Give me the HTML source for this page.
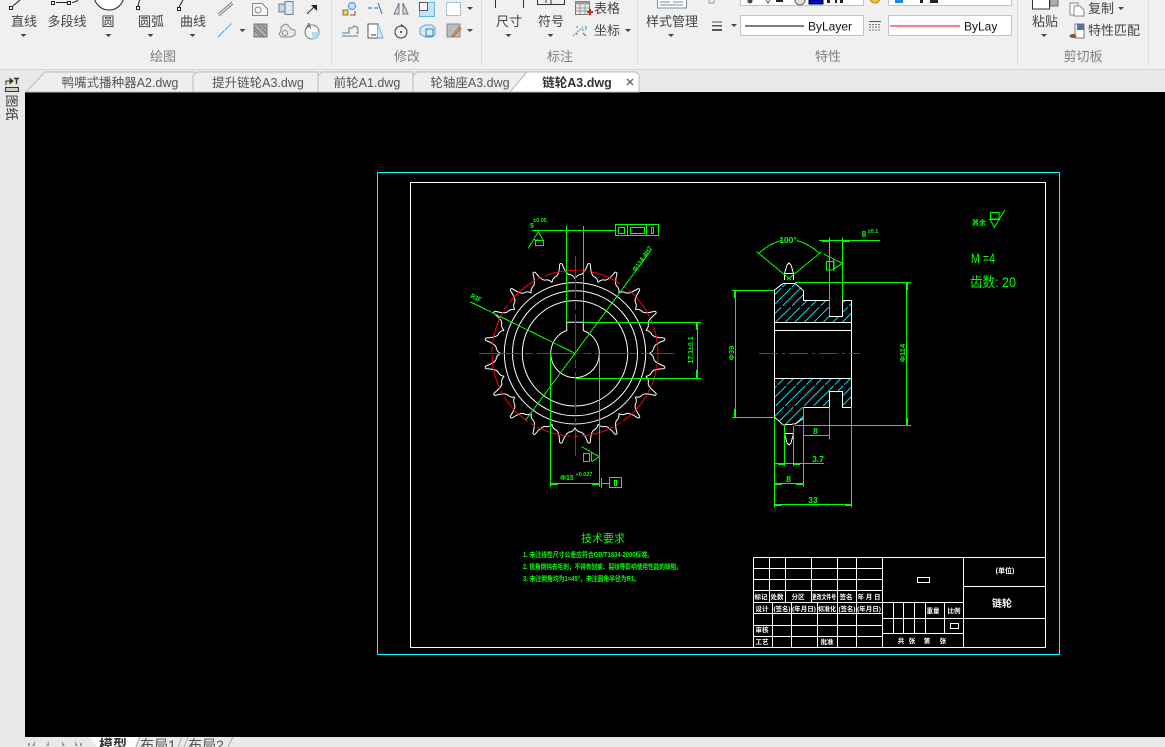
<!DOCTYPE html>
<html lang="zh">
<head>
<meta charset="utf-8">
<title>链轮A3.dwg</title>
<style>
html,body{margin:0;padding:0;background:#000;width:1165px;height:747px;overflow:hidden}
svg{display:block;font-family:"Liberation Sans","Noto Sans CJK SC",sans-serif}
.rb{font-size:13px;fill:#444;text-anchor:middle}
.gl{font-size:13px;fill:#808080;text-anchor:middle}
.tb{font-size:12.5px;fill:#555;text-anchor:middle}
.g{stroke:#00ff00;fill:none;stroke-width:1;shape-rendering:crispEdges}
.ga{stroke:#00ff00;fill:none;stroke-width:1;shape-rendering:crispEdges}
.w{stroke:#fff;fill:none;stroke-width:1}
.wc{stroke:#fff;fill:none;stroke-width:1;shape-rendering:crispEdges}
.r{stroke:#ff0000;fill:none;stroke-width:1;shape-rendering:crispEdges}
.gt{fill:#00ff00;font-size:7px;text-anchor:middle;font-weight:bold}
.wt{fill:#fff;font-size:6.5px;text-anchor:middle;font-weight:bold}
.ar{fill:#00ff00}
</style>
</head>
<body>
<svg width="1165" height="747" viewBox="0 0 1165 747" xmlns="http://www.w3.org/2000/svg">
<defs>
<path id="t" d="M73.6,-11.6Q78,-10.5 79,-6L81,-4.2Q85,-2.2 90.3,-1.2Q91.6,0 90.3,1.2Q85,2.2 81,4.2L79,6Q78,10.5 73.6,11.6"/>
<clipPath id="cl1"><rect x="964" y="15" width="33" height="21"/></clipPath>
<clipPath id="hu"><path d="M774.3,322.3V290L783.3,283.3H795L803.3,290.7V300.3H829.3V316.3H842.3V300.3H851.7V322.3Z"/></clipPath>
<clipPath id="hl"><path d="M774.3,378.3V416.7L783.3,425L795,424L803.3,418.3V407.3H829.3V391.3H842.3V407.3H851.7V378.3Z"/></clipPath>
</defs>

<rect x="0" y="0" width="1165" height="747" fill="#000"/>

<!-- ribbon -->
<rect x="0" y="0" width="1165" height="69" fill="#f0f0f0"/>
<rect x="0" y="69" width="1165" height="1" fill="#d6d6d6"/>
<rect x="0" y="70" width="1165" height="22" fill="#e9e9e9"/>
<rect x="0" y="70" width="25" height="677" fill="#e9e9e9"/>
<rect x="25" y="737" width="1140" height="10" fill="#e9e9e9"/>
<g fill="#dcdcdc">
<rect x="331" y="0" width="1" height="65"/><rect x="481" y="0" width="1" height="65"/>
<rect x="637" y="0" width="1" height="65"/><rect x="1017" y="0" width="1" height="65"/>
<rect x="1148" y="0" width="1" height="65"/>
</g>

<text class="rb" x="24" y="26">直线</text>
<text class="rb" x="67" y="26">多段线</text>
<text class="rb" x="108" y="26">圆</text>
<text class="rb" x="151" y="26">圆弧</text>
<text class="rb" x="193" y="26">曲线</text>
<text class="rb" x="509" y="26">尺寸</text>
<text class="rb" x="551" y="26">符号</text>
<text class="rb" x="607" y="13">表格</text>
<text class="rb" x="607" y="35">坐标</text>
<text class="rb" x="672" y="26">样式管理</text>
<text class="rb" x="1045" y="26">粘贴</text>
<text class="rb" x="1101" y="13">复制</text>
<text class="rb" x="1114" y="35">特性匹配</text>

<text class="gl" x="163" y="61">绘图</text>
<text class="gl" x="407" y="61">修改</text>
<text class="gl" x="560" y="61">标注</text>
<text class="gl" x="828" y="61">特性</text>
<text class="gl" x="1083" y="61">剪切板</text>

<g fill="#444">
<path d="M20.5,34h6l-3,3z"/><path d="M105.5,34h6l-3,3z"/><path d="M147.5,34h6l-3,3z"/><path d="M189.5,34h6l-3,3z"/>
<path d="M239.5,29h6l-3,3z"/><path d="M467,7h6l-3,3z"/><path d="M467,29h6l-3,3z"/>
<path d="M505.5,34h6l-3,3z"/><path d="M547.5,34h6l-3,3z"/><path d="M625,29h6l-3,3z"/>
<path d="M668,34h6l-3,3z"/><path d="M731,24h6l-3,3z"/><path d="M853,24h6l-3,3z" fill="#888"/>
<path d="M1001,24h6l-3,3z" fill="#888"/><path d="M1041,34h6l-3,3z"/><path d="M1118,7h6l-3,3z"/>
</g>

<g fill="#fff" stroke="#222" stroke-width="1">
<path d="M13,6L20,0" fill="none"/><rect x="9.5" y="6.5" width="3" height="3"/>
<path d="M56,2.5H68M72,2.5Q76,2 78,0" fill="none"/><rect x="51.5" y="1.5" width="3" height="3"/><rect x="67.5" y="1.5" width="3" height="3"/>
<circle cx="109" cy="-5" r="15"/>
<path d="M138,6L139.5,0" fill="none"/><rect x="136.5" y="6.5" width="3" height="3"/>
<path d="M179,7L183,0" fill="none"/><rect x="177.5" y="7.5" width="3" height="3"/>
</g>
<g fill="none" stroke-width="1">
<path d="M218,14L232,2M219,16L233,4" stroke="#777"/>
<path d="M218,37L232,23" stroke="#3fa9e6" stroke-dasharray="9 1"/>
<path d="M252.5,3.5H262L267.5,9V15.5H252.5Z" stroke="#888" fill="#f8f8f8"/><circle cx="258" cy="10" r="3" stroke="#888"/>
<rect x="279" y="4" width="14" height="8" stroke="#778" fill="#c6d8ee"/><rect x="285" y="1.5" width="8" height="13" stroke="#778" fill="#dbe8f6"/>
<path d="M307,14L315,6" stroke="#333"/>
<path d="M311,5H317V11Z" fill="#222"/>
<rect x="254" y="24" width="13" height="13" stroke="#777" fill="#aaa"/>
<path d="M254,30L261,37M254,27L264,37M257,24L267,34M261,24L267,30" stroke="#777"/>
<path d="M285,24l3,1 3,4 4,1v5l-4,2h-10l-2,-3 2,-3v-4z" stroke="#888" fill="#e4e8ee"/><circle cx="285" cy="33" r="2.5" stroke="#888" fill="#f0f0f0"/>
<circle cx="312" cy="32" r="7" stroke="#777" fill="#f8f8f8"/><path d="M312,32V39A7,7 0 0 0 319,32Z" fill="#aee0f7"/>
<text x="306" y="29" font-size="8" fill="#444" stroke="none">A</text>
</g>

<g fill="none" stroke-width="1">
<rect x="343" y="10" width="5" height="5" fill="#f5d638" stroke="#777"/><circle cx="352" cy="6" r="3.5" fill="#bfe3f8" stroke="#4a8fc0"/><path d="M350,15h5v-4" stroke="#b33"/>
<path d="M368,8h4M374,8h4M378,3L382,14" stroke="#356d9c"/>
<path d="M399,3L394,14H399ZM403,3L408,14H403Z" stroke="#778" fill="#cfd8e2"/>
<rect x="419.5" y="2.5" width="15" height="14" stroke="#63b5e0" fill="#bfe5f8"/><rect x="419.5" y="2.5" width="8" height="8" fill="#f8f8f8" stroke="#556"/>
<rect x="446.5" y="2.5" width="14" height="13" stroke="#7ea7c8" fill="#fff" stroke-dasharray="2 1"/>
<path d="M342,33h7v-5h3l2,-2 3,1 1,3v3h-2M342,36h16" stroke="#4a7ba6"/>
<path d="M368,24H378V38H368Z" stroke="#555" fill="#fff"/><path d="M378,24L383,38H378" stroke="#63b5e0" fill="#cfeafa"/><path d="M371,35h5" stroke="#333"/>
<circle cx="401" cy="32" r="6" stroke="#333"/><circle cx="401" cy="32" r="1" fill="#333"/><path d="M401,24l3,2 -3,1z" fill="#333"/>
<path d="M420,28l5,-3h7l3,3v7l-3,2h-7l-5,-3z" stroke="#5da3cf" fill="#d4ecf9"/><rect x="426" y="29" width="7" height="7" stroke="#4a7ba6"/>
<rect x="447" y="24" width="13" height="13" stroke="#888" fill="#bbb"/><path d="M452,36l7,-9 2,2 -7,7z" fill="#e8a642" stroke="#a66"/>
</g>

<g fill="none" stroke-width="1">
<path d="M495.5,0V8M523.5,0V8" stroke="#333"/>
<path d="M537.5,0V4.5H564.5V0M551,0V4.5" stroke="#333"/><path d="M546,0v3" stroke="#333"/>
<rect x="575.5" y="1.5" width="14" height="13" stroke="#777" fill="#eee"/><rect x="575.5" y="1.5" width="14" height="3" fill="#999"/>
<path d="M580,5V14M585,5V14M576,8H589M576,11H589" stroke="#999"/>
<path d="M587,12H593M590,9V15" stroke="#c22" stroke-width="2"/>
<path d="M577,26v3M577,33v3M582,30h4M573,36l10,-9" stroke="#4a8fc0" stroke-dasharray="2 1"/><path d="M583,33l3,3M586,26v3" stroke="#666"/>
<rect x="657.5" y="-2" width="29" height="10" stroke="#7a8aa0" fill="#fff"/><path d="M660,2h10M673,2h10M660,5h23" stroke="#7a8aa0"/>
</g>

<g>
<rect x="709" y="-1" width="5" height="4" fill="none" stroke="#999"/>
<rect x="712" y="21.5" width="10" height="1" fill="#555"/><rect x="712" y="25" width="10" height="1.5" fill="#555"/><rect x="712" y="29" width="10" height="2" fill="#555"/>
<rect x="740.5" y="-2" width="123" height="7.5" fill="#fff" stroke="#c4c4c4"/>
<rect x="888.5" y="-2" width="123" height="7.5" fill="#fff" stroke="#c4c4c4"/>
<rect x="740.5" y="15.5" width="123" height="20" fill="#fff" stroke="#c4c4c4"/>
<rect x="888.5" y="15.5" width="123" height="20" fill="#fff" stroke="#c4c4c4"/>
<circle cx="750" cy="1" r="2.5" fill="#444"/>
<path d="M766,0l2,3 2,-3" stroke="#555" fill="none"/><rect x="776" y="0" width="7" height="2" fill="#222"/>
<circle cx="800" cy="0" r="5" fill="#ddd" stroke="#666"/>
<rect x="809" y="0" width="14" height="4" fill="#0000ff" stroke="#000"/>
<rect x="827" y="0" width="3" height="3" fill="#222"/><rect x="835" y="0" width="2" height="3" fill="#222"/><rect x="840" y="0" width="3" height="3" fill="#222"/>
<circle cx="875" cy="-2" r="5" fill="#f1c232" stroke="#b58a1c"/>
<rect x="895" y="0" width="8" height="3" fill="#1e88e5"/><rect x="920" y="0" width="3" height="3" fill="#222"/><rect x="930" y="0" width="8" height="3" fill="#222"/>
<rect x="869" y="21" width="12" height="1" fill="#555"/>
<path d="M869,24.5h12M869,27h12M869,30h12" stroke="#777" stroke-dasharray="2 1"/>
<path d="M745,26H804" stroke="#000" stroke-width="1" shape-rendering="crispEdges"/>
<text x="808" y="30.5" font-size="12" fill="#111">ByLayer</text>
<path d="M890,26H960" stroke="#ff0000" stroke-width="1" shape-rendering="crispEdges"/>
<text x="964" y="30.5" font-size="12" fill="#111" clip-path="url(#cl1)">ByLayer</text>
</g>

<g fill="none" stroke-width="1">
<rect x="1050" y="-2" width="8" height="8" fill="#b5ad9e" stroke="#666"/>
<rect x="1032.5" y="-2" width="17" height="11" fill="#fff" stroke="#333"/>
<path d="M1070,3h8v12h-8z" fill="#fff" stroke="#888"/><path d="M1074,6h6l4,4v6h-10z" fill="#fff" stroke="#888"/>
<rect x="1075" y="24" width="9" height="14" fill="#fff" stroke="#777"/><rect x="1077" y="24" width="7" height="6" fill="#4a76a8"/><ellipse cx="1073" cy="36" rx="3.5" ry="2" fill="#8a5a2c"/>
</g>

<!-- left strip -->
<rect x="5" y="78" width="15" height="14" fill="#e6e6d2"/>
<g fill="none" stroke="#333" stroke-width="1">
<path d="M6,85V81h6"/><path d="M10,78.5l3,2.5 -3,2.5z" fill="#333"/>
<path d="M14,78.5h5M16.5,78.5V84" stroke-width="1.5"/><rect x="5.5" y="87.5" width="13" height="4" fill="#ccc"/>
</g>
<g font-size="13" fill="#333" text-anchor="middle">
<text transform="translate(7,101) rotate(90)">图</text>
<text transform="translate(7,114) rotate(90)">纸</text>
</g>

<!-- doc tabs -->
<path d="M26,92L45,72H193L197,76V92Z" fill="#eeeeee" stroke="#bcbcbc"/>
<path d="M193,92V76L197,72H318V92Z" fill="#eeeeee" stroke="#bcbcbc"/>
<path d="M318,92V76L322,72H413V92Z" fill="#eeeeee" stroke="#bcbcbc"/>
<path d="M413,92V76L417,72H527L510,92Z" fill="#eeeeee" stroke="#bcbcbc"/>
<path d="M510,92L527,72H636L639,75V92Z" fill="#fff" stroke="#bcbcbc"/>
<text class="tb" x="120" y="87">鸭嘴式播种器A2.dwg</text>
<text class="tb" x="258" y="87">提升链轮A3.dwg</text>
<text class="tb" x="367" y="87">前轮A1.dwg</text>
<text class="tb" x="470" y="87">轮轴座A3.dwg</text>
<text class="tb" x="577" y="87" font-weight="bold" style="fill:#333">链轮A3.dwg</text>
<path d="M627,79l6,6M633,79l-6,6" stroke="#666" stroke-width="1.4"/>

<!-- bottom tabs -->
<path d="M90,737L97,747H135L138,737Z" fill="#fff"/>
<path d="M136,747L140,737M178,747L182,737M184,747L188,737M228,747L233,737" stroke="#aaa" fill="none"/>
<text x="113" y="750" font-size="14" font-weight="bold" fill="#333" text-anchor="middle">模型</text>
<text x="158" y="750" font-size="14" fill="#555" text-anchor="middle">布局1</text>
<text x="206" y="750" font-size="14" fill="#555" text-anchor="middle">布局2</text>
<g fill="#999"><path d="M28,746V743h2v3zM35,741l-3,5h3z"/><path d="M49,741l-3,5h3z"/><path d="M62,741l3,5h-3z"/><path d="M75,741l3,5h-3zM80,743h2v3h-2z"/></g>

<!-- frames -->
<rect x="377.5" y="172.5" width="682" height="482" fill="none" stroke="#00ffff" stroke-width="1" shape-rendering="crispEdges"/>
<rect x="410.5" y="182.5" width="635" height="465" fill="none" stroke="#fff" stroke-width="1" shape-rendering="crispEdges"/>

<!-- sprocket -->
<g transform="translate(575 353.3)">
<g class="w">
<use href="#t" transform="rotate(9)"/><use href="#t" transform="rotate(27)"/><use href="#t" transform="rotate(45)"/><use href="#t" transform="rotate(63)"/><use href="#t" transform="rotate(81)"/>
<use href="#t" transform="rotate(99)"/><use href="#t" transform="rotate(117)"/><use href="#t" transform="rotate(135)"/><use href="#t" transform="rotate(153)"/><use href="#t" transform="rotate(171)"/>
<use href="#t" transform="rotate(189)"/><use href="#t" transform="rotate(207)"/><use href="#t" transform="rotate(225)"/><use href="#t" transform="rotate(243)"/><use href="#t" transform="rotate(261)"/>
<use href="#t" transform="rotate(279)"/><use href="#t" transform="rotate(297)"/><use href="#t" transform="rotate(315)"/><use href="#t" transform="rotate(333)"/><use href="#t" transform="rotate(351)"/>
<circle r="52.7"/><circle r="62.5"/><circle r="70.7"/>
<path d="M-8.3,-22.8V-31H8.3V-22.8A24.3,24.3 0 1 1 -8.3,-22.8Z"/>
</g>
<circle r="83" fill="none" stroke="#ff0000" stroke-width="1" stroke-dasharray="34 3 5 3"/>
</g>
<path class="r" d="M479,353.5H674" stroke-dasharray="42 4 8 4"/>
<path class="r" d="M575.5,256V456" stroke-dasharray="42 4 8 4"/>

<g class="g">
<path d="M532,230.5H615M566.5,226V322.5M583.5,226V322.5M583,322.5H701M575,378.5H701M697.5,322V378"/>
<rect x="615.5" y="224.5" width="43" height="11"/><path d="M627.5,224V236M646.5,224V236"/>
<rect x="618.5" y="227.5" width="6" height="6"/><rect x="630.5" y="227.5" width="14" height="6"/><rect x="651.5" y="227.5" width="2" height="6"/>
<path d="M550.5,353V487M599.5,353V487M550,483.5H599M601.5,478V488M601,483.5H609"/>
<rect x="609.5" y="477.5" width="12" height="10"/><rect x="614.5" y="480.5" width="2" height="5"/>
<rect x="535.5" y="240.5" width="8" height="5"/>
<rect x="583.5" y="453.5" width="6" height="8"/>
</g>
<g class="ga">
<path d="M470,301.7L575,353.3M651.7,249.3L525.7,420"/>
<path d="M528.3,248.3L538.3,231.7L543,240M534,240H538"/>
<path d="M581.7,446.7L599.3,456.7L591.7,461.7M591.7,452.7V461.7"/>
</g>
<g class="ar">
<rect x="696" y="322" width="2" height="8"/><rect x="696" y="370" width="2" height="8"/>
<rect x="551" y="483" width="7" height="2"/><rect x="592" y="483" width="7" height="2"/>
</g>
<text class="gt" x="532" y="228">5</text>
<text class="gt" x="540" y="222" style="font-size:5.5px">±0.05</text>
<text class="gt" x="567" y="480">Φ15</text><text class="gt" x="584" y="476" style="font-size:5.5px">+0.027</text>
<text class="gt" transform="translate(475 300) rotate(25)" style="font-size:7px" textLength="11" lengthAdjust="spacingAndGlyphs">R3F</text>
<text class="gt" transform="translate(644 260) rotate(-55)" style="font-size:6.5px">Φ114.4H7</text>
<text class="gt" transform="translate(693 350) rotate(-90)" style="font-size:7px">17.1±0.1</text>

<!-- side view -->
<g stroke="#00cfe6" stroke-width="1" fill="none" shape-rendering="crispEdges" stroke-dasharray="25 2" clip-path="url(#hu)">
<path d="M735,325L780,280M744.5,325L789.5,280M754,325L799,280M763.5,325L808.5,280M773,325L818,280M782.5,325L827.5,280M792,325L837,280M801.5,325L846.5,280M811,325L856,280M820.5,325L865.5,280M830,325L875,280M839.5,325L884.5,280M849,325L894,280"/>
</g>
<g stroke="#00cfe6" stroke-width="1" fill="none" shape-rendering="crispEdges" stroke-dasharray="28 2" clip-path="url(#hl)">
<path d="M726,427L776,377M735.5,427L785.5,377M745,427L795,377M754.5,427L804.5,377M764,427L814,377M773.5,427L823.5,377M783,427L833,377M792.5,427L842.5,377M802,427L852,377M811.5,427L861.5,377M821,427L871,377M830.5,427L880.5,377M840,427L890,377"/>
</g>
<g class="wc">
<path d="M774.5,322.5V290L783.3,283.3H795L803.5,290.7V300.5H829.5V316.5H842.5V300.5H851.5V322.5Z"/>
<path d="M774.5,322V417L783.3,425L795,424L803.5,418.3V407.5H829.5V391.5H842.5V407.5H851.5V322"/>
<path d="M774,330.5H852M774,378.5H852"/>
<path d="M784.5,273.5L787,265L789,263L791,265L793.5,273.5ZM784.5,274V280M793.5,274V280"/>
<path d="M784.5,426V433.5H793.5V426M784.5,433.5L787,443L789,445L791,443L793.5,433.5"/>
</g>
<path class="r" d="M759,353.5H860" stroke-dasharray="19 4 3 4"/>
<g class="g">
<path d="M819,240.5H880M829.5,237.7V316M842.5,237.7V300"/>
<rect x="826.5" y="261.5" width="7.5" height="8.5"/>
<path d="M795,282.5H911M795,425.5H911M906.5,282V425"/>
<path d="M732,290.5H774M732,417.5H774M735.5,290V417"/>
<path d="M774.5,417V507.5M851.5,407V507.5M803.5,407V487M829.5,407V439M803,435.5H829"/>
<path d="M784.5,426V466M793.5,426V466M774,463.5H824M774,483.5H803M774,504.5H852"/>
</g>
<g class="ga">
<path d="M756.7,251.7L791,280M821.7,251.7L787,280"/>
<path d="M759.5,253Q767,245 781,240.5M797,240.5Q811,245 819,253"/>
<path d="M824,254.3L842.3,263.3L833.3,269.3M833.3,259.3V269.3"/>
</g>
<g class="ar">
<rect x="734" y="290" width="2" height="8"/><rect x="734" y="409" width="2" height="8"/>
<rect x="906" y="283" width="2" height="7"/><rect x="906" y="418" width="2" height="7"/>
<rect x="822" y="240" width="7" height="2"/><rect x="843" y="240" width="7" height="2"/>
<rect x="778" y="463" width="6" height="2"/><rect x="794" y="463" width="6" height="2"/>
<rect x="775" y="483" width="7" height="2"/><rect x="796" y="483" width="7" height="2"/>
<rect x="775" y="504" width="7" height="2"/><rect x="845" y="504" width="7" height="2"/>
</g>
<text class="gt" x="788" y="243" style="font-size:8.5px">100°</text>
<text class="gt" x="864" y="237" style="font-size:8px">8</text><text class="gt" x="873" y="233" style="font-size:5.5px">±0.1</text>
<text class="gt" x="815.5" y="434" style="font-size:8.5px">8</text>
<text class="gt" x="818" y="462" style="font-size:8.5px">3.7</text>
<text class="gt" x="788.5" y="482" style="font-size:8.5px">8</text>
<text class="gt" x="813" y="503" style="font-size:8.5px">33</text>
<text class="gt" transform="translate(734 353) rotate(-90)" style="font-size:7.5px">Φ39</text>
<text class="gt" transform="translate(905 353) rotate(-90)" style="font-size:7.5px">Φ114</text>

<!-- notes top right -->
<text class="gt" x="979" y="225" style="font-size:7px">其余</text>
<g class="ga">
<rect x="990.5" y="212.5" width="8.5" height="6.5"/>
<path d="M989,219.5H1000"/>
</g>
<path d="M990,219L994.3,227.3L1005,210" stroke="#00ff00" fill="none"/>
<text x="971" y="263" fill="#00ff00" font-size="14" textLength="24" lengthAdjust="spacingAndGlyphs">M =4</text>
<text x="970" y="287" fill="#00ff00" font-size="14" textLength="46" lengthAdjust="spacingAndGlyphs">齿数: 20</text>

<!-- tech notes -->
<text x="603" y="542" fill="#00ff00" font-size="11" text-anchor="middle">技术要求</text>
<g fill="#00ff00" font-size="7" font-weight="bold">
<text x="523" y="557" textLength="130" lengthAdjust="spacingAndGlyphs">1. 未注线性尺寸公差应符合GB/T1804-2000标准。</text>
<text x="523" y="569" textLength="159" lengthAdjust="spacingAndGlyphs">2. 锐角倒钝去毛刺，不得有划痕、裂纹等影响使用性能的缺陷。</text>
<text x="523" y="581" textLength="117" lengthAdjust="spacingAndGlyphs">3. 未注倒角均为1×45°，未注圆角半径为R1。</text>
</g>

<!-- title block -->
<g class="wc">
<path d="M753.5,557.5H1045M753.5,557.5V647M882.5,557V647M963.5,557V647"/>
<path d="M753,568.5H882M753,579.5H882M753,590.5H882M753,602.5H963M753,613.5H882M753,625.5H882M753,636.5H882"/>
<path d="M769.5,557V602M785.5,557V602M811.5,557V602M837.5,557V602M856.5,557V602"/>
<path d="M772.5,602V647M791.5,602V647M817.5,602V647M837.5,602V647M856.5,602V647"/>
<path d="M882,618.5H963M882,633.5H963"/>
<path d="M893.5,602V633M903.5,602V633M914.5,602V633M925.5,602V633M944.5,602V633"/>
<path d="M963,586.5H1045M963,618.5H1045"/>
<rect x="917.5" y="577.5" width="12" height="5"/>
<rect x="950.5" y="623.5" width="8" height="5"/>
</g>
<g class="wt">
<text x="761" y="599">标记</text><text x="777" y="599">处数</text><text x="798" y="599">分区</text><text x="824" y="599" textLength="24" lengthAdjust="spacingAndGlyphs">更改文件号</text><text x="846" y="599">签名</text><text x="869" y="599">年 月 日</text>
<text x="762" y="611">设计</text><text x="782" y="611" textLength="17" lengthAdjust="spacingAndGlyphs">(签名)</text><text x="804" y="611" textLength="24" lengthAdjust="spacingAndGlyphs">(年月日)</text><text x="827" y="611" textLength="18" lengthAdjust="spacingAndGlyphs">标准化</text><text x="847" y="611" textLength="17" lengthAdjust="spacingAndGlyphs">(签名)</text><text x="869" y="611" textLength="24" lengthAdjust="spacingAndGlyphs">(年月日)</text>
<text x="762" y="632">审核</text><text x="762" y="644">工艺</text><text x="827" y="644">批准</text>
<text x="933" y="613">重量</text><text x="954" y="613">比例</text>
<text x="901" y="643">共</text><text x="912" y="643">张</text><text x="927" y="643">第</text><text x="943" y="643">张</text>
</g>
<text x="1005" y="573" fill="#fff" font-size="7" font-weight="bold" text-anchor="middle">(单位)</text>
<text x="1002" y="607" fill="#fff" font-size="10" font-weight="bold" text-anchor="middle">链轮</text>
</svg>
</body>
</html>
